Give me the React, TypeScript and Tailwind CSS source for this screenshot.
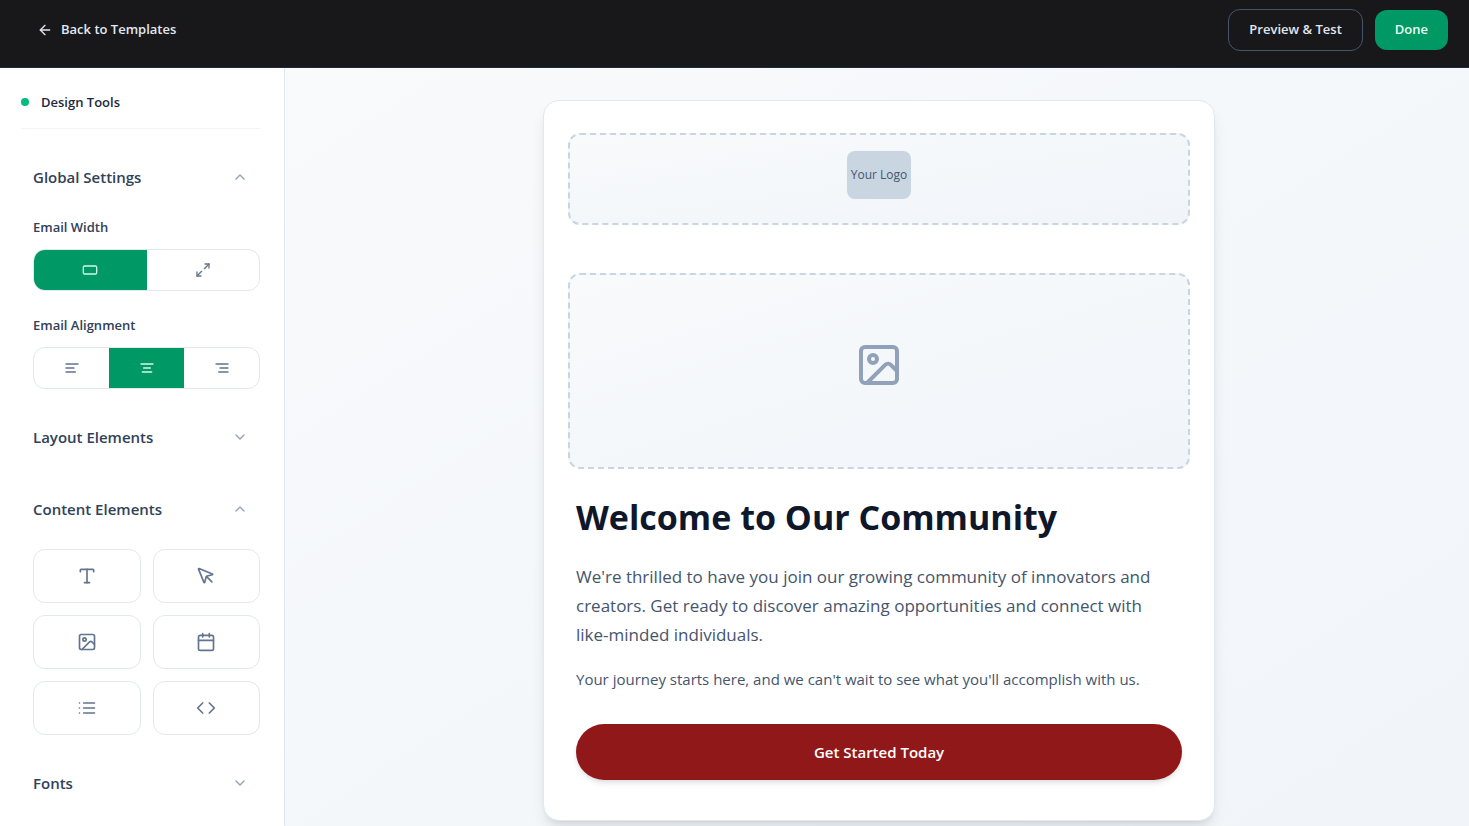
import React from 'react';
import {
  ArrowLeft,
  Calendar,
  ChevronDown,
  ChevronUp,
  Code,
  Image,
  Maximize2,
  MousePointer,
  RectangleHorizontal,
  Type,
} from 'lucide-react';

type IconType = React.ComponentType<{ className?: string }>;

interface Option {
  label: string;
  icon: IconType;
}

// stroke icon made of a single path
const lineIcon = (d: string): IconType => ({ className }) => (
  <svg
    viewBox="0 0 24 24"
    fill="none"
    stroke="currentColor"
    strokeWidth={2}
    strokeLinecap="round"
    strokeLinejoin="round"
    aria-hidden="true"
    className={className}
  >
    <path d={d} />
  </svg>
);

const AlignLeft = lineIcon('M21 6H3M15 12H3M17 18H3');
const AlignCenter = lineIcon('M21 6H3M17 12H7M19 18H5');
const AlignRight = lineIcon('M21 6H3M21 12H9M21 18H7');
const List = lineIcon('M8 6h13M8 12h13M8 18h13M3 6h.01M3 12h.01M3 18h.01');

const widthOptions: Option[] = [
  { label: 'Fixed width', icon: RectangleHorizontal },
  { label: 'Full width', icon: Maximize2 },
];

const alignOptions: Option[] = [
  { label: 'Align left', icon: AlignLeft },
  { label: 'Align center', icon: AlignCenter },
  { label: 'Align right', icon: AlignRight },
];

const contentElements: Option[] = [
  { label: 'Text', icon: Type },
  { label: 'Button', icon: MousePointer },
  { label: 'Image', icon: Image },
  { label: 'Calendar', icon: Calendar },
  { label: 'List', icon: List },
  { label: 'Code', icon: Code },
];

interface SectionProps {
  title: string;
  open?: boolean;
  onToggle: () => void;
  children?: React.ReactNode;
}

const Section: React.FC<SectionProps> = ({ title, open = false, onToggle, children }) => {
  const Chevron = open ? ChevronUp : ChevronDown;
  return (
    <section>
      <button
        type="button"
        onClick={onToggle}
        aria-expanded={open}
        className="flex h-12 w-full items-center justify-between pr-3 text-left text-[15px] font-semibold text-slate-700"
      >
        {title}
        <Chevron className="size-4 text-slate-400" />
      </button>
      {open && children}
    </section>
  );
};

interface SegmentedProps {
  label: string;
  options: Option[];
  value: number;
  onChange: (index: number) => void;
}

const Segmented: React.FC<SegmentedProps> = ({ label, options, value, onChange }) => (
  <div>
    <p className="mb-3 text-[13px] leading-5 font-semibold text-slate-700">{label}</p>
    <div role="group" aria-label={label} className="flex h-[42px] overflow-hidden rounded-xl border border-slate-200 bg-white">
      {options.map(({ label: name, icon: Icon }, index) => (
        <button
          key={name}
          type="button"
          aria-label={name}
          aria-pressed={index === value}
          onClick={() => onChange(index)}
          className={`flex flex-1 items-center justify-center ${
            index === value ? 'bg-[#009966] text-emerald-100' : 'text-slate-500'
          }`}
        >
          <Icon className="size-4" />
        </button>
      ))}
    </div>
  </div>
);

const App: React.FC = () => {
  const [width, setWidth] = React.useState(0);
  const [align, setAlign] = React.useState(1);
  const [open, setOpen] = React.useState<Record<string, boolean>>({ global: true, content: true });

  const toggle = (key: string) => setOpen((prev) => ({ ...prev, [key]: !prev[key] }));

  return (
    <div className="flex h-screen flex-col bg-white font-['Open_Sans','Noto_Sans',sans-serif]">
      <header className="flex items-center justify-between border-b border-slate-800 bg-[#18181b] pt-[9px] pr-[21px] pb-4 pl-[37px]">
        <a href="#templates" className="flex items-center gap-2 text-[13px] font-semibold text-slate-200">
          <ArrowLeft className="size-4" />
          Back to Templates
        </a>
        <div className="flex items-center gap-3">
          <button type="button" className="h-[42px] rounded-xl border border-slate-600 px-5 text-[13px] font-semibold text-slate-200">
            Preview &amp; Test
          </button>
          <button type="button" className="h-10 rounded-xl bg-[#009966] px-5 text-[13px] font-semibold text-emerald-50">
            Done
          </button>
        </div>
      </header>

      <div className="flex min-h-0 flex-1">
        <aside className="w-[285px] shrink-0 overflow-y-auto border-r border-slate-200 pt-[22px] pr-6 pl-[21px] [scrollbar-width:none]">
          <div className="flex items-center gap-3 border-b border-slate-100 pb-[14px]">
            <span className="size-2 rounded-full bg-emerald-500" />
            <h2 className="text-[13px] leading-6 font-semibold text-slate-800">Design Tools</h2>
          </div>

          <div className="flex flex-col gap-6 pt-6 pl-3">
            <Section title="Global Settings" open={open.global} onToggle={() => toggle('global')}>
              <div className="flex flex-col gap-6 pt-4">
                <Segmented label="Email Width" options={widthOptions} value={width} onChange={setWidth} />
                <Segmented label="Email Alignment" options={alignOptions} value={align} onChange={setAlign} />
              </div>
            </Section>

            <Section title="Layout Elements" open={open.layout} onToggle={() => toggle('layout')} />

            <Section title="Content Elements" open={open.content} onToggle={() => toggle('content')}>
              <div className="grid grid-cols-2 gap-3 pt-4">
                {contentElements.map(({ label, icon: Icon }) => (
                  <button
                    key={label}
                    type="button"
                    aria-label={label}
                    className="flex h-[54px] items-center justify-center rounded-xl border border-slate-200 bg-white text-slate-500"
                  >
                    <Icon className="size-5" />
                  </button>
                ))}
              </div>
            </Section>

            <Section title="Fonts" open={open.fonts} onToggle={() => toggle('fonts')} />
          </div>
        </aside>

        <main className="flex-1 overflow-y-auto bg-linear-to-br from-slate-50 to-slate-100 py-8 pr-8 pl-9 [scrollbar-width:none]">
          <article className="mx-auto max-w-2xl rounded-2xl border border-slate-200 bg-white px-6 pt-8 pb-10 shadow-lg">
            <div className="flex justify-center rounded-xl border-2 border-dashed border-slate-300 bg-linear-to-br from-slate-50 to-slate-100 pt-4 pb-6">
              <div className="flex h-12 w-16 items-center justify-center rounded-lg bg-slate-300 text-xs font-medium whitespace-nowrap text-slate-600">
                Your Logo
              </div>
            </div>

            <div className="mt-12 flex h-[196px] items-center justify-center rounded-xl border-2 border-dashed border-slate-300 bg-linear-to-br from-slate-50 to-slate-100 pb-3">
              <Image className="size-12 text-slate-400" />
            </div>

            <div className="px-2 pt-7">
              <h1 className="text-[34px] leading-10 font-bold text-slate-900">Welcome to Our Community</h1>
              <p className="mt-[25px] text-[17px] leading-[29px] text-slate-600">
                We're thrilled to have you join our growing community of innovators and creators. Get ready to discover amazing
                opportunities and connect with <span className="whitespace-nowrap">like-minded</span> individuals.
              </p>
              <p className="mt-[17px] text-[15px] leading-[26px] text-slate-600">
                Your journey starts here, and we can't wait to see what you'll accomplish with us.
              </p>
              <button type="button" className="mt-8 h-14 w-full rounded-full bg-[#911818] text-[15px] font-semibold text-white shadow-md">
                Get Started Today
              </button>
            </div>
          </article>
        </main>
      </div>
    </div>
  );
};

export default App;
